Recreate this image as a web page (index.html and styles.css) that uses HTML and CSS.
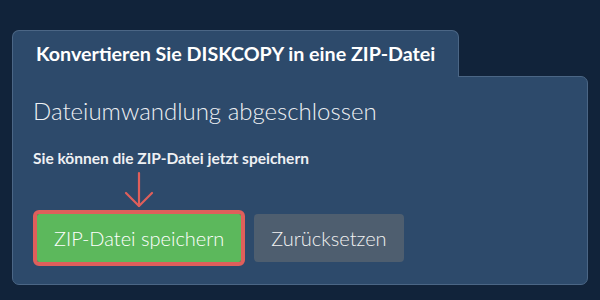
FILE: index.html
```html
<!doctype html>
<html lang="de">
    <head>
        <meta charset="UTF-8" />
        <meta name="viewport" content="width=device-width, initial-scale=1.0" />
        <title>DISKCOPY in ZIP konvertieren</title>
        <link rel="stylesheet" href="styles.css">
    </head>
    <body>
        <div class="converter">
            <div class="tab">Konvertieren Sie DISKCOPY in eine ZIP-Datei</div>

            <div class="panel">
                <h2 class="status">Dateiumwandlung abgeschlossen</h2>
                <p class="hint">Sie können die ZIP-Datei jetzt speichern</p>

                <div class="actions">
                    <div class="save-wrap">
                        <svg
                            class="arrow"
                            xmlns="http://www.w3.org/2000/svg"
                            viewBox="0 0 30 40"
                            fill="none"
                            stroke="currentColor"
                            stroke-width="2.2"
                            stroke-linecap="round"
                            stroke-linejoin="round"
                        >
                            <line x1="15" y1="3" x2="15" y2="36"></line>
                            <polyline points="2,23 15,36 28,23"></polyline>
                        </svg>
                        <button class="btn btn-save">ZIP-Datei speichern</button>
                    </div>
                    <button class="btn btn-reset">Zurücksetzen</button>
                </div>
            </div>
        </div>
    </body>
</html>
```

FILE: styles.css
```css
:root {
    --bg-color: #11233a;
    --panel-bg: #2d4a6b;
    --panel-border: #4b6685;
    --text-color: #ffffff;
    --accent-red: #df5f5b;
    --btn-green: #5cb85c;
    --btn-gray: #4e5e6f;
}

* {
    box-sizing: border-box;
}

body {
    font-family: Lato, "Open Sans", Arial, sans-serif;
    margin: 0;
    padding: 30px 12px 0;
    background: var(--bg-color);
    color: var(--text-color);
}

.converter {
    display: flex;
    flex-direction: column;
    align-items: flex-start;
}

.tab {
    position: relative;
    z-index: 1;
    height: 47px;
    line-height: 46px;
    padding: 0 23px;
    margin-bottom: -1px;
    font-size: 19.7px;
    font-weight: bold;
    background: var(--panel-bg);
    border: 1px solid var(--panel-border);
    border-bottom: none;
    border-radius: 7px 7px 0 0;
}

.panel {
    align-self: stretch;
    padding: 20px 20px 22px;
    background: var(--panel-bg);
    border: 1px solid var(--panel-border);
    border-radius: 0 7px 7px 7px;
}

.status {
    margin: 0;
    font-size: 24px;
    font-weight: 300;
    line-height: 1.2;
    color: #eef0f3;
}

.hint {
    margin: 23px 0 0;
    font-size: 15.5px;
    font-weight: bold;
    line-height: 1.2;
    color: #eef0f3;
}

.actions {
    display: flex;
    align-items: flex-end;
    gap: 9px;
    margin-top: 3px;
}

.save-wrap {
    display: flex;
    flex-direction: column;
    align-items: center;
}

.arrow {
    width: 30px;
    height: 40px;
    color: var(--accent-red);
}

.btn {
    font-family: inherit;
    font-size: 20px;
    font-weight: 300;
    line-height: 24px;
    padding: 12px 17px;
    border: none;
    border-radius: 4px;
    color: #fff;
    cursor: pointer;
}

.btn-save {
    margin: 4px 4px 0;
    background: var(--btn-green);
    outline: 4px solid var(--accent-red);
    border-radius: 2px;
}

.btn-reset {
    background: var(--btn-gray);
    color: #f2f2f2;
}
```
